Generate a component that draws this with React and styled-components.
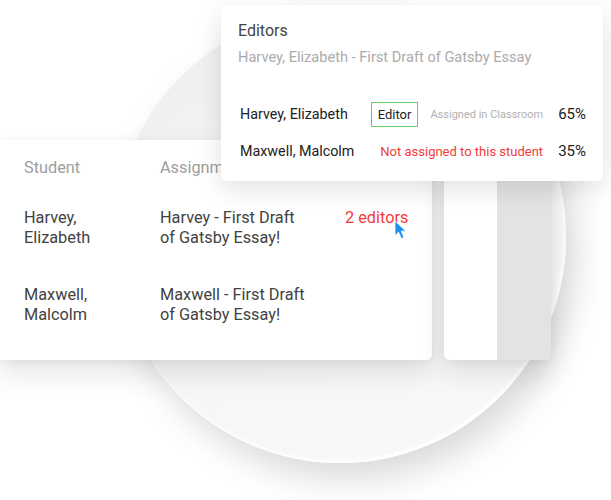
import React from "react";
import styled, { createGlobalStyle } from "styled-components";

const GlobalStyle = createGlobalStyle`
  body {
    margin: 0;
    background: #fff;
    font-family: Roboto, "Liberation Sans", sans-serif;
  }
`;

const students = [
  {
    name: ["Harvey,", "Elizabeth"],
    assignment: ["Harvey - First Draft", "of Gatsby Essay!"],
    editors: 2,
  },
  {
    name: ["Maxwell,", "Malcolm"],
    assignment: ["Maxwell - First Draft", "of Gatsby Essay!"],
  },
];

const editors = [
  { name: "Harvey, Elizabeth", role: "Editor", note: "Assigned in Classroom", share: 65 },
  { name: "Maxwell, Malcolm", warning: "Not assigned to this student", share: 35 },
];

const App = () => {
  return (
    <>
      <GlobalStyle />
      <Scene>
        <Circle />
        <Board>
          <TableCard>
            <HeadRow>
              <HeadCell>Student</HeadCell>
              <HeadCell>Assignment</HeadCell>
              <HeadCell />
            </HeadRow>
            {students.map((s) => (
              <Row key={s.name[0]}>
                <Cell>
                  {s.name[0]}
                  <br />
                  {s.name[1]}
                </Cell>
                <Cell>
                  {s.assignment[0]}
                  <br />
                  {s.assignment[1]}
                </Cell>
                <Cell>
                  {s.editors && (
                    <EditorsLink>
                      {s.editors} editors
                      <Cursor />
                    </EditorsLink>
                  )}
                </Cell>
              </Row>
            ))}
          </TableCard>
          <SideCard>
            <SideColumn />
            <SideColumn $shaded />
          </SideCard>
        </Board>

        <Popup>
          <PopupTitle>Editors</PopupTitle>
          <PopupSubtitle>Harvey, Elizabeth - First Draft of Gatsby Essay</PopupSubtitle>
          <EditorList>
            {editors.map((e) => (
              <EditorRow key={e.name}>
                <EditorName>{e.name}</EditorName>
                <Status>
                  {e.role && <RoleBadge>{e.role}</RoleBadge>}
                  {e.note && <Note>{e.note}</Note>}
                  {e.warning && <Warning>{e.warning}</Warning>}
                </Status>
                <Share>{e.share}%</Share>
              </EditorRow>
            ))}
          </EditorList>
        </Popup>
      </Scene>
    </>
  );
};

const Cursor = () => (
  <CursorSvg viewBox="0 0 14 20" width="14" height="20">
    <path
      d="M1 1 L1 15.5 L4.6 12.2 L7.4 18.6 L10 17.4 L7.3 11.2 L12 11.2 Z"
      fill="#1e90f0"
      stroke="#fff"
      strokeWidth="0.8"
      strokeLinejoin="round"
    />
  </CursorSvg>
);

const Scene = styled.div`
  position: relative;
  width: 611px;
  height: 500px;
  overflow: hidden;
  background: #fff;
`;

const Circle = styled.div`
  position: absolute;
  left: 114px;
  top: 11px;
  width: 452px;
  height: 452px;
  border-radius: 50%;
  background: linear-gradient(140deg, #ececec 0%, #f6f6f6 38%, #f9f9f9 100%);
  box-shadow: 10px 16px 34px rgba(0, 0, 0, 0.15),
    inset -2px -3px 3px rgba(255, 255, 255, 0.9);
`;

const Board = styled.div`
  position: relative;
  display: flex;
  gap: 12px;
  padding-top: 140px;
`;

const TableCard = styled.div`
  width: 408px;
  height: 220px;
  padding-left: 24px;
  background: #fff;
  border-radius: 0 6px 6px 0;
  box-shadow: 0 14px 28px rgba(0, 0, 0, 0.1), 0 2px 8px rgba(0, 0, 0, 0.06);
`;

const HeadRow = styled.div`
  display: grid;
  grid-template-columns: 136px 185px 1fr;
  padding-top: 18px;
  margin-bottom: 30px;
`;

const HeadCell = styled.div`
  font-size: 16.3px;
  line-height: 20px;
  color: #9e9e9e;
  white-space: nowrap;
`;

const Row = styled.div`
  display: grid;
  grid-template-columns: 136px 185px 1fr;
  height: 77px;
`;

const Cell = styled.div`
  font-size: 16.3px;
  line-height: 20px;
  color: #424242;
`;

const EditorsLink = styled.span`
  position: relative;
  color: #f23b3b;
  white-space: nowrap;
`;

const CursorSvg = styled.svg`
  position: absolute;
  left: 49px;
  top: 12px;
`;

const SideCard = styled.div`
  display: flex;
  height: 220px;
  border-radius: 6px 0 0 6px;
  overflow: hidden;
  box-shadow: 0 14px 28px rgba(0, 0, 0, 0.1), 0 2px 8px rgba(0, 0, 0, 0.06);
`;

const SideColumn = styled.div`
  width: ${(p) => (p.$shaded ? "54px" : "53px")};
  background: ${(p) => (p.$shaded ? "#e3e3e3" : "#fff")};
`;

const Popup = styled.div`
  position: absolute;
  left: 221px;
  top: 5px;
  width: 348px;
  padding: 16px 17px 17px 17px;
  background: #fff;
  border-radius: 6px;
  box-shadow: 0 8px 26px rgba(0, 0, 0, 0.12);
`;

const PopupTitle = styled.div`
  font-size: 16px;
  line-height: 20px;
  color: #444;
`;

const PopupSubtitle = styled.div`
  margin-top: 7px;
  font-size: 14.6px;
  line-height: 18px;
  color: #ababab;
  white-space: nowrap;
`;

const EditorList = styled.div`
  display: flex;
  flex-direction: column;
  gap: 11px;
  margin-top: 35px;
  padding-left: 2px;
`;

const EditorRow = styled.div`
  display: flex;
  align-items: center;
  height: 26px;
`;

const EditorName = styled.div`
  flex: 1;
  font-size: 14.3px;
  color: #212121;
  white-space: nowrap;
`;

const Status = styled.div`
  display: flex;
  align-items: center;
  gap: 12px;
`;

const RoleBadge = styled.div`
  height: 25px;
  box-sizing: border-box;
  padding: 0 6px;
  display: flex;
  align-items: center;
  border: 1px solid #5cd065;
  font-size: 13px;
  color: #222;
`;

const Note = styled.div`
  font-size: 11px;
  color: #b0b0b0;
  white-space: nowrap;
`;

const Warning = styled.div`
  font-size: 13px;
  color: #f23b3b;
  white-space: nowrap;
`;

const Share = styled.div`
  margin-left: 15px;
  font-size: 15px;
  color: #212121;
`;

export default App;
